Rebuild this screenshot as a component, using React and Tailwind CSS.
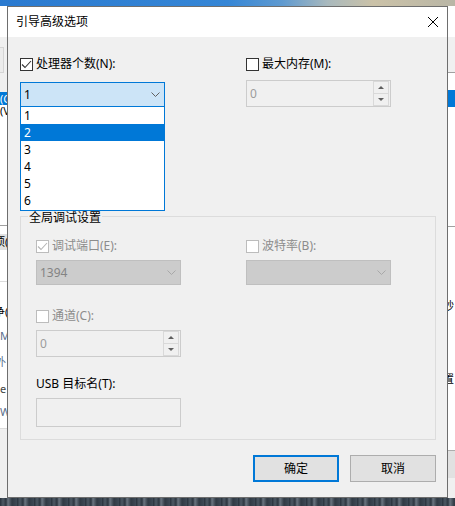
import React from 'react';

function Check({ checked, disabled }) {
  return (
    <span
      className={
        disabled
          ? 'w-[13px] h-[13px] border border-[#bcbcbc] bg-white flex items-center justify-center shrink-0'
          : 'w-[13px] h-[13px] border border-[#333333] bg-white flex items-center justify-center shrink-0'
      }
    >
      {checked && (
        <svg width="11" height="11" viewBox="0 0 11 11">
          <path d="M1 5.5 L4 8.5 L10 2" fill="none" stroke={disabled ? '#b5b5b5' : '#333333'} strokeWidth="1.1" />
        </svg>
      )}
    </span>
  );
}

function Chevron({ color }) {
  return (
    <svg width="9" height="5" viewBox="0 0 9 5">
      <path d="M0.5 0.5 L4.5 4.5 L8.5 0.5" fill="none" stroke={color} strokeWidth="1" />
    </svg>
  );
}

function Spin({ value }) {
  return (
    <div className="h-[27px] border border-[#cccccc] bg-[#f0f0f0] flex">
      <div className="flex-1 pl-[3px] flex items-center text-[#9c9c9c] leading-none">{value}</div>
      <div className="w-[16px] mr-[1px] flex flex-col">
        <div className="h-[13px] border border-[#d9d9d9] flex items-center justify-center">
          <svg width="6" height="3" viewBox="0 0 6 3">
            <path d="M0 3 L3 0 L6 3 Z" fill="#5f5f5f" />
          </svg>
        </div>
        <div className="h-[12px] border-x border-b border-[#d9d9d9] flex items-center justify-center">
          <svg width="6" height="3" viewBox="0 0 6 3">
            <path d="M0 0 L3 3 L6 0 Z" fill="#5f5f5f" />
          </svg>
        </div>
      </div>
    </div>
  );
}

function DisabledCombo({ value }) {
  return (
    <div className="h-[25px] border border-[#bfbfbf] bg-[#cccccc] flex items-center justify-between pl-[3px] pr-[4px]">
      <span className="text-[#838383] leading-none">{value}</span>
      <Chevron color="#a8a8a8" />
    </div>
  );
}

export default function App() {
  return (
    <div className="relative w-[455px] h-[506px] overflow-hidden bg-[#333d47] font-['Noto_Sans','Noto_Sans_CJK_SC',sans-serif] text-[12px] text-black">
      {/* desktop top strip */}
      <div className="absolute left-0 top-0 w-[455px] h-[6px] bg-[linear-gradient(90deg,#2a7ad0_0%,#3586d6_50%,#5f9ad0_62%,#a9b9bd_72%,#cbc2a8_82%,#b9b6a6_100%)]" />
      {/* desktop bottom strip */}
      <div className="absolute left-0 bottom-0 w-[455px] h-[9px] bg-[repeating-linear-gradient(90deg,#27313b_0px,#4d5964_3px,#2c3640_6px,#6a7580_8px,#303a44_12px,#3e4a56_17px)]" />

      {/* background window, left edge */}
      <div className="absolute left-0 top-[6px] w-[7px] h-[492px] bg-white overflow-hidden flex flex-col text-[11px] leading-[12px]">
        <div className="h-[31px] bg-white" />
        <div className="h-[55px] bg-[#f0f0f0] pt-[10px]">
          <div className="w-[4px] h-[26px] border-y border-r border-[#d5d5d5] bg-[#ececec]" />
        </div>
        <div className="h-[13px] overflow-hidden bg-[#0078d7] text-white whitespace-nowrap flex items-center">(C</div>
        <div className="h-[12px] overflow-hidden whitespace-nowrap flex items-center">(V</div>
        <div className="h-[108px]" />
        <div className="h-px bg-[#a0a0a0]" />
        <div className="h-[8px]" />
        <div className="h-[16px] overflow-hidden bg-[#e1e1e1] whitespace-nowrap ml-[-6px] flex items-center">项(</div>
        <div className="h-[31px]" />
        <div className="h-px bg-[#dcdcdc]" />
        <div className="h-[24px]" />
        <div className="h-[24px] overflow-hidden whitespace-nowrap ml-[-6px]">争(</div>
        <div className="h-[26px] overflow-hidden whitespace-nowrap text-[#5a6f8c]">M</div>
        <div className="h-[27px] overflow-hidden whitespace-nowrap text-[#5a6f8c] ml-[-5px]">外</div>
        <div className="h-[23px] overflow-hidden whitespace-nowrap text-[#444]">e</div>
        <div className="h-[22px] overflow-hidden whitespace-nowrap text-[#5a6f8c]">W</div>
        <div className="h-px bg-[#dcdcdc]" />
        <div className="flex-1 bg-[#f0f0f0]" />
      </div>

      {/* background window, right edge */}
      <div className="absolute left-[448px] top-[6px] w-[7px] h-[492px] bg-white overflow-hidden flex flex-col text-[11px] leading-[12px]">
        <div className="h-[31px] bg-white" />
        <div className="h-[35px] bg-[#f0f0f0]" />
        <div className="h-px bg-[#a0a0a0]" />
        <div className="h-[17px]" />
        <div className="h-[17px] bg-[#0078d7]" />
        <div className="h-[119px]" />
        <div className="h-px bg-[#a0a0a0]" />
        <div className="h-[73px]" />
        <div className="h-[73px] overflow-hidden whitespace-nowrap ml-[-5px]">秒</div>
        <div className="h-[77px] overflow-hidden whitespace-nowrap ml-[-5px]">置</div>
        <div className="h-[28px] bg-[#e1e1e1] border-t border-[#adadad]" />
        <div className="flex-1 bg-[#f0f0f0]" />
      </div>

      {/* dialog */}
      <div className="absolute left-[7px] top-[6px] w-[441px] h-[492px] border border-[#6e6e6e] bg-[#f0f0f0] flex flex-col">
        {/* title bar */}
        <div className="h-[30px] bg-white flex items-center justify-between pl-[8px] pr-[9px]">
          <span className="leading-none">引导高级选项</span>
          <svg width="10" height="10" viewBox="0 0 10 10">
            <path d="M0 0 L10 10 M10 0 L0 10" stroke="#000" strokeWidth="1" />
          </svg>
        </div>

        {/* body */}
        <div className="flex-1 flex flex-col pt-[20px] pl-[12px]">
          <div className="flex">
            {/* processors */}
            <div className="w-[145px] flex flex-col">
              <div className="h-[14px] flex items-center gap-[3px]">
                <Check checked />
                <span className="leading-[14px]">处理器个数(N):</span>
              </div>
              <div className="relative mt-[11px]">
                <div className="h-[25px] border border-[#0078d7] bg-[#cce4f7] flex items-center justify-between pl-[3px] pr-[4px]">
                  <span className="leading-none">1</span>
                  <Chevron color="#606060" />
                </div>
                <div className="absolute left-0 top-[25px] w-[145px] bg-white border-x border-b border-[#0078d7] pb-[1px] z-10">
                  {['1', '2', '3', '4', '5', '6'].map((n) => (
                    <div
                      key={n}
                      className={
                        n === '2'
                          ? 'h-[17px] flex items-center pl-[3px] bg-[#0078d7] text-white'
                          : 'h-[17px] flex items-center pl-[3px] text-black'
                      }
                    >
                      {n}
                    </div>
                  ))}
                </div>
              </div>
            </div>

            {/* max memory */}
            <div className="w-[145px] ml-[81px] flex flex-col">
              <div className="h-[14px] flex items-center gap-[3px]">
                <Check />
                <span className="leading-[14px]">最大内存(M):</span>
              </div>
              <div className="mt-[9px]">
                <Spin value="0" />
              </div>
            </div>
          </div>

          {/* global debug settings */}
          <div className="relative mt-[109px] w-[416px] h-[224px] border border-[#dcdcdc] pt-[22px] pl-[15px] flex flex-col">
            <span className="absolute left-[7px] top-[-6px] px-[1px] bg-[#f0f0f0] leading-[14px]">全局调试设置</span>

            <div className="flex">
              <div className="w-[145px] flex flex-col">
                <div className="h-[14px] flex items-center gap-[3px]">
                  <Check checked disabled />
                  <span className="leading-[14px] text-[#8c8c8c]">调试端口(E):</span>
                </div>
                <div className="mt-[7px]">
                  <DisabledCombo value="1394" />
                </div>
              </div>
              <div className="w-[145px] ml-[65px] flex flex-col">
                <div className="h-[14px] flex items-center gap-[3px]">
                  <Check disabled />
                  <span className="leading-[14px] text-[#8c8c8c]">波特率(B):</span>
                </div>
                <div className="mt-[7px]">
                  <DisabledCombo value="" />
                </div>
              </div>
            </div>

            <div className="w-[145px] mt-[24px] flex flex-col">
              <div className="h-[14px] flex items-center gap-[3px]">
                <Check disabled />
                <span className="leading-[14px] text-[#8c8c8c]">通道(C):</span>
              </div>
              <div className="mt-[7px]">
                <Spin value="0" />
              </div>
            </div>

            <div className="mt-[20px] leading-[14px]">USB 目标名(T):</div>
            <div className="mt-[7px] w-[145px] h-[29px] border border-[#cccccc] bg-[#f0f0f0]" />
          </div>

          {/* buttons */}
          <div className="mt-[15px] w-[416px] flex justify-end gap-[11px]">
            <button className="w-[86px] h-[27px] border-2 border-[#0078d7] bg-[#e1e1e1] flex items-center justify-center leading-none">确定</button>
            <button className="w-[86px] h-[27px] border border-[#adadad] bg-[#e1e1e1] flex items-center justify-center leading-none">取消</button>
          </div>
        </div>
      </div>
    </div>
  );
}
